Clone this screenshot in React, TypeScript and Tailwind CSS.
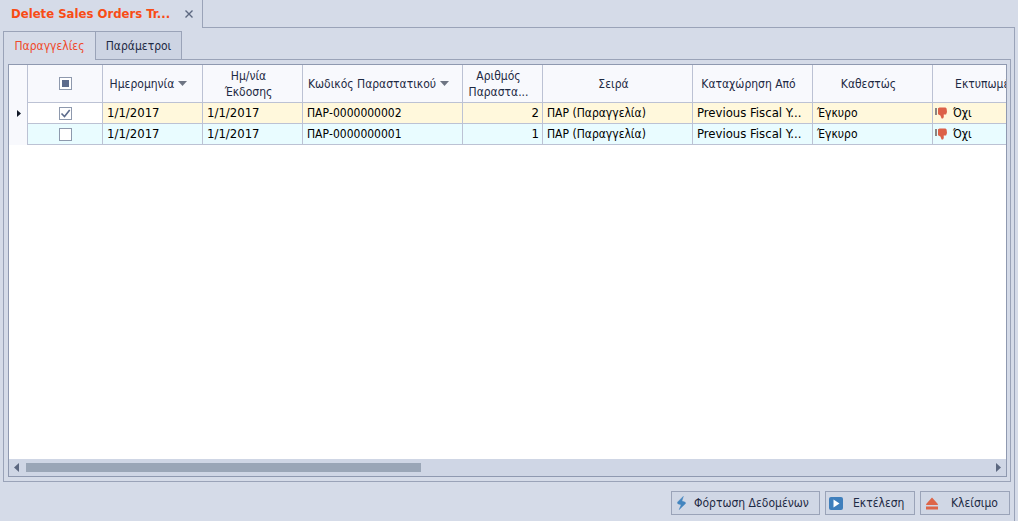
import { useState } from "react";

const COLUMNS = [
  { key: "date", label: "Ημερομηνία", width: "w-[100px]", sorted: true },
  { key: "issued", label: "Ημ/νία Έκδοσης", width: "w-[100px]", sorted: false },
  { key: "code", label: "Κωδικός Παραστατικού", width: "w-[160px]", sorted: true },
  { key: "number", label: "Αριθμός Παραστα...", width: "w-[80px]", sorted: false },
  { key: "series", label: "Σειρά", width: "w-[150px]", sorted: false },
  { key: "postedFrom", label: "Καταχώρηση Από", width: "w-[120px]", sorted: false },
  { key: "status", label: "Καθεστώς", width: "w-[120px]", sorted: false },
  { key: "printed", label: "Εκτυπωμένο", width: "w-[120px]", sorted: false },
] as const;

const ORDERS = [
  {
    date: "1/1/2017",
    issued: "1/1/2017",
    code: "ΠΑΡ-0000000002",
    number: "2",
    series: "ΠΑΡ (Παραγγελία)",
    postedFrom: "Previous Fiscal Y...",
    status: "Έγκυρο",
    printed: "Όχι",
  },
  {
    date: "1/1/2017",
    issued: "1/1/2017",
    code: "ΠΑΡ-0000000001",
    number: "1",
    series: "ΠΑΡ (Παραγγελία)",
    postedFrom: "Previous Fiscal Y...",
    status: "Έγκυρο",
    printed: "Όχι",
  },
];

const CELL_STYLE: Record<string, string> = {
  date: "pl-1 text-[13px]",
  issued: "pl-1 text-[13px]",
  number: "pr-[3px] text-right text-[13px]",
  postedFrom: "pl-1 text-[13px]",
  printed: "pl-[2px]",
};

const CHECKBOX =
  "block size-[13px] shrink-0 appearance-none border border-[#8e99ad] bg-white bg-center bg-no-repeat";

function ThumbDown() {
  return (
    <svg className="h-3 w-3 shrink-0" viewBox="0 0 12 12" aria-hidden="true">
      <path d="M0 1h2v7H0z" fill="#8b8580" />
      <path d="M3 1.3 4.5.5h6l1.1 1 .4 3.5-.9 2.6H8.7l.1 2.4-.8 1.5H6.6L5.4 8.6 3 7.2z" fill="#dc6148" />
    </svg>
  );
}

function BoltIcon() {
  return (
    <svg className="h-[14px] w-[9px] shrink-0" viewBox="0 0 9 14" aria-hidden="true">
      <path d="M6.3.4.5 6.2l.3 1.5 3.4 1.1-2 4.8 6.3-6-.3-1.4-3.4-1.1z" fill="#4385bf" stroke="#4385bf" strokeWidth=".5" />
    </svg>
  );
}

function PlayIcon() {
  return (
    <svg className="h-[13px] w-[14px] shrink-0" viewBox="0 0 14 13" aria-hidden="true">
      <rect width="14" height="13" rx="2" fill="#3f7fbc" />
      <path d="M4.5 2.5v8l6-4z" fill="#fff" />
    </svg>
  );
}

function EjectIcon() {
  return (
    <svg className="h-[13px] w-3 shrink-0" viewBox="0 0 12 13" aria-hidden="true">
      <path d="M6 .5l5.6 6.2L12 8H0l.4-1.3zM0 9.5h12v3H0z" fill="#dd6549" />
    </svg>
  );
}

export default function App() {
  const [tab, setTab] = useState("orders");
  const [selected, setSelected] = useState([true, false]);
  const some = selected.some(Boolean);
  const all = selected.every(Boolean);

  const toggle = (index: number) => {
    setSelected((prev) => prev.map((value, i) => (i === index ? !value : value)));
  };

  return (
    <div className="flex h-screen flex-col overflow-hidden bg-[#d5dbe8] pr-[3px] font-['DejaVu_Sans_Condensed','DejaVu_Sans',sans-serif] text-[12px] leading-4 text-[#1e2a44]">
      <header className="flex h-7 shrink-0">
        <div className="flex w-[203px] items-center justify-between border-r border-[#9aa3b8] pr-2 pl-[11px]">
          <h1 className="text-[13px] font-bold whitespace-nowrap text-[#f84c16]">Delete Sales Orders Tr...</h1>
          <button className="flex size-[11px] items-center justify-center" aria-label="Close tab">
            <svg className="size-2" viewBox="0 0 8 8" aria-hidden="true">
              <path d="M.5.5l7 7M7.5.5l-7 7" stroke="#5c6880" strokeWidth="1.4" />
            </svg>
          </button>
        </div>
        <div className="flex-1 border-b border-[#9aa3b8]" />
      </header>

      <main className="flex min-h-0 flex-1 flex-col border-r border-[#9aa3b8] px-[3px] pt-[3px]">
        <div className="flex h-7 shrink-0" role="tablist">
          <button
            role="tab"
            aria-selected={tab === "orders"}
            onClick={() => setTab("orders")}
            className="w-[92px] border-t border-l border-[#9aa3b8] text-[#f0492a]"
          >
            Παραγγελίες
          </button>
          <button
            role="tab"
            aria-selected={tab === "params"}
            onClick={() => setTab("params")}
            className="w-[87px] border border-b-0 border-[#9aa3b8] bg-[#cdd4e3]"
          >
            Παράμετροι
          </button>
        </div>

        <div className="flex min-h-0 flex-1 flex-col border border-t-0 border-[#9aa3b8] pr-[3px] pb-1 pl-1">
          <div className="-mr-1 ml-[87px] h-px shrink-0 bg-[#9aa3b8]" />
          <div className="mt-1 flex min-h-0 flex-1 flex-col border border-[#8f99b0] bg-white">
            <div className="min-h-0 flex-1 overflow-hidden">
              <table className="w-[1044px] table-fixed border-separate border-spacing-0">
                <thead>
                  <tr className="h-[38px] bg-[#f8f9fd]">
                    <th className="w-[19px] border-r border-[#bcc2d4]" />
                    <th className="w-[75px] border-r border-b border-[#bcc2d4] p-0">
                      <input
                        type="checkbox"
                        aria-label="Select all"
                        aria-checked={some && !all ? "mixed" : all}
                        checked={all}
                        onChange={() => setSelected([!all, !all])}
                        className={`${CHECKBOX} mx-auto bg-[linear-gradient(#5d6c8c,#5d6c8c)] bg-[length:7px_7px]`}
                      />
                    </th>
                    {COLUMNS.map((column) => (
                      <th
                        key={column.key}
                        className={`${column.width} border-r border-b border-[#bcc2d4] py-0 pr-2 pl-0 font-normal`}
                      >
                        <div className="flex items-center justify-center gap-1">
                          <span className={column.key === "issued" ? "w-16" : ""}>{column.label}</span>
                          {column.sorted && (
                            <svg className="h-[5px] w-[9px] shrink-0" viewBox="0 0 9 5" aria-hidden="true">
                              <path d="M0 0h9L4.5 5z" fill="#6e7583" />
                            </svg>
                          )}
                        </div>
                      </th>
                    ))}
                  </tr>
                </thead>
                <tbody className="text-black">
                  {ORDERS.map((order, index) => (
                    <tr key={order.code} className={`h-[21px] ${index === 0 ? "bg-[#fff8dc]" : "bg-[#e9fcff]"}`}>
                      <td className="border-r border-[#bcc2d4] bg-[#f8f9fd] p-0">
                        {index === 0 && (
                          <svg className="ml-2 h-[7px] w-1" viewBox="0 0 4 7" aria-hidden="true">
                            <path d="M0 0l4 3.5L0 7z" fill="#111827" />
                          </svg>
                        )}
                      </td>
                      <td className={`border-r border-b border-[#bcc2d4] p-0 ${index === 0 ? "bg-white" : ""}`}>
                        <label className="mx-auto grid size-[13px]">
                          <input
                            type="checkbox"
                            aria-label={`Select ${order.code}`}
                            checked={selected[index]}
                            onChange={() => toggle(index)}
                            className={`${CHECKBOX} col-start-1 row-start-1`}
                          />
                          {selected[index] && (
                            <svg className="pointer-events-none col-start-1 row-start-1 size-[13px]" viewBox="0 0 13 13" aria-hidden="true">
                              <path d="M2.5 6.5l3 3L10.7 3" fill="none" stroke="#5d6c8c" strokeWidth="1.6" />
                            </svg>
                          )}
                        </label>
                      </td>
                      {COLUMNS.map(({ key }) => (
                        <td
                          key={key}
                          className={`border-r border-b border-[#bcc2d4] py-0 leading-4 whitespace-nowrap ${CELL_STYLE[key] ?? "pl-1"}`}
                        >
                          {key === "printed" ? (
                            <span className="flex items-center gap-[6px]">
                              <ThumbDown />
                              {order[key]}
                            </span>
                          ) : (
                            order[key]
                          )}
                        </td>
                      ))}
                    </tr>
                  ))}
                </tbody>
              </table>
            </div>

            <div className="flex h-[17px] shrink-0 items-center bg-[#cfd6e5] px-[5px]">
              <button aria-label="Scroll left">
                <svg className="h-[9px] w-[5px]" viewBox="0 0 5 9" aria-hidden="true">
                  <path d="M5 0v9L0 4.5z" fill="#5c6880" />
                </svg>
              </button>
              <div className="mx-[7px] flex-1">
                <div className="h-[9px] w-[41%] bg-[#9aa6b7]" />
              </div>
              <button aria-label="Scroll right">
                <svg className="h-[9px] w-[5px]" viewBox="0 0 5 9" aria-hidden="true">
                  <path d="M0 0v9l5-4.5z" fill="#5c6880" />
                </svg>
              </button>
            </div>
          </div>
        </div>

        <footer className="flex shrink-0 justify-end gap-[5px] pt-[9px] pr-px pb-[6px]">
          <button className="flex h-6 w-[149px] items-center gap-2 border border-[#9aa3b8] bg-[#d0d7e5] pl-[5px] whitespace-nowrap">
            <BoltIcon />
            Φόρτωση Δεδομένων
          </button>
          <button className="flex h-6 w-[90px] items-center gap-[10px] border border-[#9aa3b8] bg-[#d0d7e5] pl-[3px] whitespace-nowrap">
            <PlayIcon />
            Εκτέλεση
          </button>
          <button className="flex h-6 w-[90px] items-center gap-[13px] border border-[#9aa3b8] bg-[#d0d7e5] pl-[5px] whitespace-nowrap">
            <EjectIcon />
            Κλείσιμο
          </button>
        </footer>
      </main>
    </div>
  );
}
